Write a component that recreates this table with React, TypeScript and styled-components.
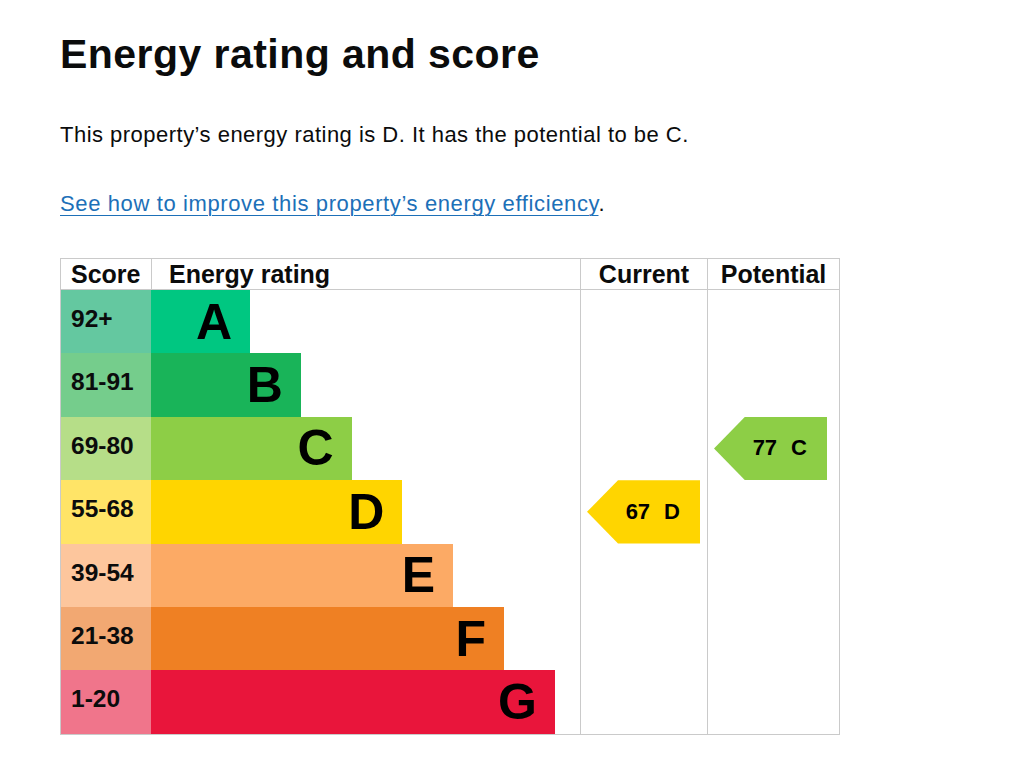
import React from "react";
import styled, { createGlobalStyle } from "styled-components";

const GlobalStyle = createGlobalStyle`
  html, body {
    margin: 0;
    padding: 0;
    background: #ffffff;
  }
  body {
    font-family: "Liberation Sans", Arial, sans-serif;
    color: #0b0c0c;
  }
`;

const Page = styled.main`
  padding: 32px 0 40px 60px;
`;

const Title = styled.h1`
  margin: 0;
  font-size: 41px;
  line-height: 44px;
  font-weight: 700;
  letter-spacing: 0.45px;
`;

const Body = styled.p`
  margin: 45px 0 0;
  font-size: 22px;
  line-height: 28px;
  letter-spacing: 0.48px;
`;

const LinkLine = styled(Body)`
  margin-top: 41px;
  letter-spacing: 0.62px;
`;

const Link = styled.a`
  color: #1d70b8;
  text-decoration: underline;
  text-decoration-thickness: 1px;
  text-underline-offset: 4px;
`;

const Chart = styled.div`
  margin-top: 40px;
  width: 780px;
  box-sizing: border-box;
  border: 1px solid #cacaca;
  display: grid;
  grid-template-columns: 90px 429px 127px 132px;
  grid-template-rows: 31px repeat(7, 63.4px);
  font-family: "Liberation Sans", Arial, sans-serif;
  font-weight: 700;
  color: #0b0c0c;
`;

const HeadCell = styled.div<{ $align?: "left" | "center"; $pad?: number; $divided?: boolean }>`
  grid-row: 1;
  box-sizing: border-box;
  border-bottom: 1px solid #cacaca;
  border-left: ${(p) => (p.$divided ? "1px solid #cacaca" : "none")};
  display: flex;
  align-items: center;
  justify-content: ${(p) => (p.$align === "center" ? "center" : "flex-start")};
  padding-left: ${(p) => p.$pad ?? 0}px;
  padding-right: ${(p) => (p.$align === "center" ? 0 : 0)}px;
  font-size: 25px;
  line-height: 1;
`;

const ScoreCell = styled.div<{ $bg: string; $row: number }>`
  grid-column: 1;
  grid-row: ${(p) => p.$row};
  background: ${(p) => p.$bg};
  display: flex;
  align-items: center;
  padding: 0 0 5px 10px;
  font-size: 24.5px;
  line-height: 1;
`;

const BarTrack = styled.div<{ $row: number }>`
  grid-column: 2;
  grid-row: ${(p) => p.$row};
  display: flex;
`;

const Bar = styled.div<{ $bg: string; $width: number }>`
  width: ${(p) => p.$width}px;
  background: ${(p) => p.$bg};
  display: flex;
  align-items: center;
  justify-content: flex-end;
  padding-right: 18px;
  box-sizing: border-box;
  font-size: 50px;
  line-height: 1;
  color: #000;
`;

const Column = styled.div<{ $col: number }>`
  grid-column: ${(p) => p.$col};
  grid-row: 2 / -1;
  border-left: 1px solid #cacaca;
`;

const Arrow = styled.div<{ $col: number; $row: number; $bg: string }>`
  grid-column: ${(p) => p.$col};
  grid-row: ${(p) => p.$row};
  margin-left: 7px;
  width: 113px;
  background: ${(p) => p.$bg};
  clip-path: polygon(31px 0, 100% 0, 100% 100%, 31px 100%, 0 50%);
  display: flex;
  align-items: center;
  justify-content: flex-end;
  gap: 14px;
  padding-right: 20px;
  box-sizing: border-box;
  font-size: 22px;
  line-height: 1;
  color: #000;
`;

type Band = { letter: string; range: string; color: string; tint: string };

const bands: Band[] = [
  { letter: "A", range: "92+", color: "#00c781", tint: "#64c8a0" },
  { letter: "B", range: "81-91", color: "#19b459", tint: "#75cd8c" },
  { letter: "C", range: "69-80", color: "#8dce46", tint: "#b6de88" },
  { letter: "D", range: "55-68", color: "#ffd500", tint: "#ffe467" },
  { letter: "E", range: "39-54", color: "#fcaa65", tint: "#fdc69d" },
  { letter: "F", range: "21-38", color: "#ef8023", tint: "#f2a872" },
  { letter: "G", range: "1-20", color: "#e9153b", tint: "#f0758b" },
];

const rowOf = (letter: string) => bands.findIndex((b) => b.letter === letter) + 2;
const colorOf = (letter: string) => bands.find((b) => b.letter === letter)!.color;

const RatingArrow = ({ col, score, letter }: { col: number; score: number; letter: string }) => (
  <Arrow $col={col} $row={rowOf(letter)} $bg={colorOf(letter)}>
    <span>{score}</span>
    <span>{letter}</span>
  </Arrow>
);

export default function App() {
  return (
    <>
      <GlobalStyle />
      <Page>
        <Title>Energy rating and score</Title>
        <Body>This property’s energy rating is D. It has the potential to be C.</Body>
        <LinkLine>
          <Link href="#">See how to improve this property’s energy efficiency</Link>.
        </LinkLine>
        <Chart>
          <HeadCell $pad={10}>Score</HeadCell>
          <HeadCell $pad={17} $divided>Energy rating</HeadCell>
          <HeadCell $align="center" $divided>Current</HeadCell>
          <HeadCell $align="center" $divided>Potential</HeadCell>
          {bands.map((b, i) => (
            <React.Fragment key={b.letter}>
              <ScoreCell $bg={b.tint} $row={i + 2}>{b.range}</ScoreCell>
              <BarTrack $row={i + 2}>
                <Bar $bg={b.color} $width={99 + i * 50.8}>{b.letter}</Bar>
              </BarTrack>
            </React.Fragment>
          ))}
          <Column $col={3} />
          <Column $col={4} />
          <RatingArrow col={3} score={67} letter="D" />
          <RatingArrow col={4} score={77} letter="C" />
        </Chart>
      </Page>
    </>
  );
}
